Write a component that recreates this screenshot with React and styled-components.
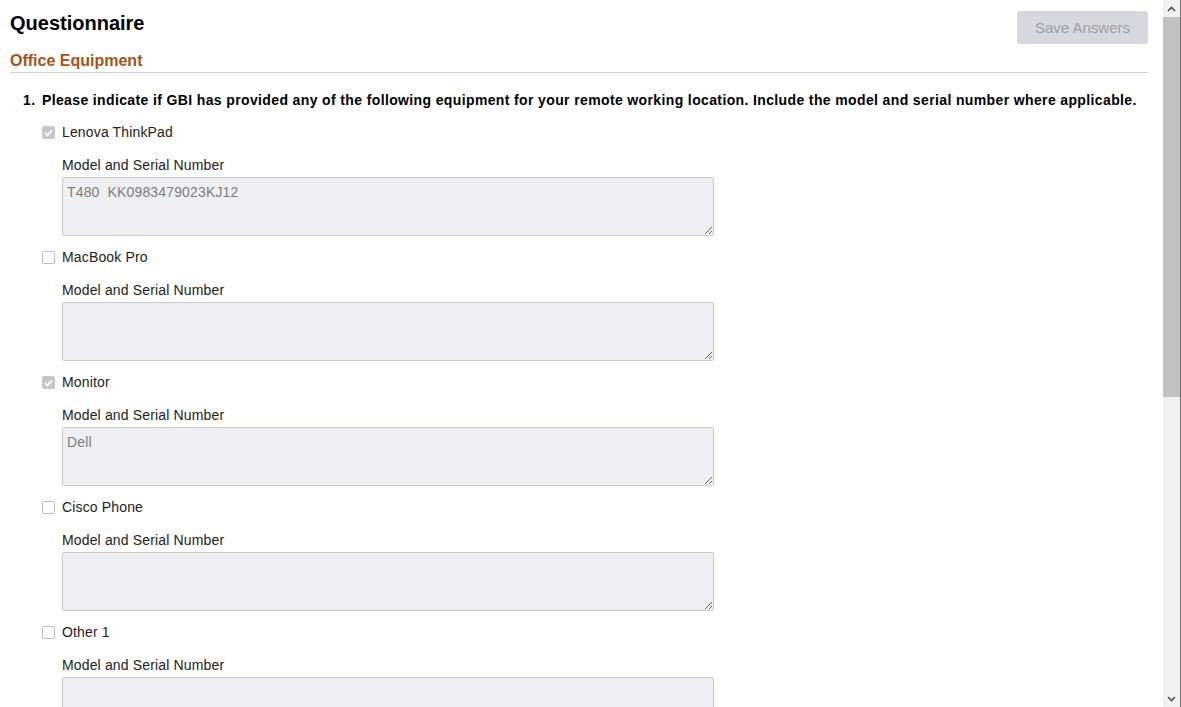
import styled, { createGlobalStyle } from "styled-components";

const GlobalStyle = createGlobalStyle`
  html, body {
    margin: 0;
    padding: 0;
    height: 100%;
    overflow: hidden;
    background: #fff;
  }
  body {
    font-family: "Liberation Sans", Arial, sans-serif;
    color: #222;
  }
`;

const Page = styled.div`
  display: flex;
  height: 707px;
  width: 1181px;
`;

const Main = styled.div`
  flex: 1;
  overflow: hidden;
  padding: 11px 15px 0 10px;
`;

const Header = styled.div`
  display: flex;
  justify-content: space-between;
  align-items: flex-start;
  height: 33px;
`;

const Title = styled.h1`
  margin: 1px 0 0;
  font-size: 20px;
  line-height: 23px;
  font-weight: bold;
  color: #000;
`;

const SaveButton = styled.button`
  width: 131px;
  height: 33px;
  border: none;
  border-radius: 3px;
  background: #d5d9df;
  color: #9a9fa6;
  font-family: "Liberation Sans", Arial, sans-serif;
  font-size: 15px;
  cursor: default;
`;

const Section = styled.h2`
  margin: 8px 0 0;
  padding-bottom: 2px;
  font-size: 16px;
  line-height: 18px;
  font-weight: bold;
  color: #a2541c;
  border-bottom: 1px solid #cfd2d6;
`;

const Question = styled.div`
  display: flex;
  margin: 17px 0 0 13px;
  font-size: 14px;
  line-height: 20px;
  font-weight: bold;
  letter-spacing: 0.37px;
  color: #000;

  & .num {
    width: 19px;
  }
`;

const Items = styled.div`
  margin: 12px 0 0 32px;
`;

const Item = styled.div`
  margin-bottom: 11px;
`;

const CheckRow = styled.label`
  display: flex;
  align-items: center;
  height: 20px;
  font-size: 14px;
  letter-spacing: 0.15px;
  color: #222;
`;

const Box = styled.span`
  box-sizing: border-box;
  width: 13px;
  height: 13px;
  margin-right: 7px;
  margin-top: 1px;
  border-radius: 2px;
  display: flex;
  align-items: center;
  justify-content: center;
  background: ${(p) => (p.$checked ? "#c7c7c7" : "#fff")};
  border: 1px solid ${(p) => (p.$checked ? "#c7c7c7" : "#bdbdbd")};
`;

const Field = styled.div`
  margin-left: 20px;
`;

const FieldLabel = styled.div`
  margin-top: 13px;
  font-size: 14px;
  line-height: 20px;
  letter-spacing: 0.15px;
  color: #222;
`;

const Area = styled.textarea`
  display: block;
  box-sizing: border-box;
  margin-top: 2px;
  width: 652px;
  height: 59px;
  padding: 6px 4px;
  border: 1px solid #c9cbcf;
  border-radius: 2px;
  background: #eff0f4;
  color: #7d7d7d;
  font-family: "Liberation Sans", Arial, sans-serif;
  font-size: 14px;
  line-height: 16px;
  letter-spacing: 0.15px;
  outline: none;
`;

const ScrollBar = styled.div`
  width: 17px;
  border-right: 1px solid #6e6e6e;
  background: #f1f1f1;
  display: flex;
  flex-direction: column;
`;

const Arrow = styled.div`
  height: 17px;
  display: flex;
  align-items: center;
  justify-content: center;
`;

const Track = styled.div`
  flex: 1;
`;

const Thumb = styled.div`
  height: 380px;
  background: #c1c1c1;
`;

const items = [
  { name: "Lenova ThinkPad", checked: true, value: "T480  KK0983479023KJ12" },
  { name: "MacBook Pro", checked: false, value: "" },
  { name: "Monitor", checked: true, value: "Dell" },
  { name: "Cisco Phone", checked: false, value: "" },
  { name: "Other 1", checked: false, value: "" },
];

const Check = () => (
  <svg width="9" height="8" viewBox="0 0 9 8">
    <path d="M1 4.2 L3.4 6.4 L8 1.4" fill="none" stroke="#fff" strokeWidth="1.8" />
  </svg>
);

const Chevron = ({ up }) => (
  <svg width="9" height="6" viewBox="0 0 9 6">
    <path
      d={up ? "M1 5 L4.5 1.5 L8 5" : "M1 1 L4.5 4.5 L8 1"}
      fill="none"
      stroke="#505050"
      strokeWidth="1.6"
    />
  </svg>
);

const App = () => {
  return (
    <Page>
      <GlobalStyle />
      <Main>
        <Header>
          <Title>Questionnaire</Title>
          <SaveButton disabled>Save Answers</SaveButton>
        </Header>
        <Section>Office Equipment</Section>
        <Question>
          <span className="num">1.</span>
          <span>
            Please indicate if GBI has provided any of the following equipment for your remote
            working location. Include the model and serial number where applicable.
          </span>
        </Question>
        <Items>
          {items.map((it) => (
            <Item key={it.name}>
              <CheckRow>
                <Box $checked={it.checked}>{it.checked && <Check />}</Box>
                {it.name}
              </CheckRow>
              <Field>
                <FieldLabel>Model and Serial Number</FieldLabel>
                <Area readOnly value={it.value} />
              </Field>
            </Item>
          ))}
        </Items>
      </Main>
      <ScrollBar>
        <Arrow>
          <Chevron up />
        </Arrow>
        <Track>
          <Thumb />
        </Track>
        <Arrow>
          <Chevron />
        </Arrow>
      </ScrollBar>
    </Page>
  );
};

export default App;
